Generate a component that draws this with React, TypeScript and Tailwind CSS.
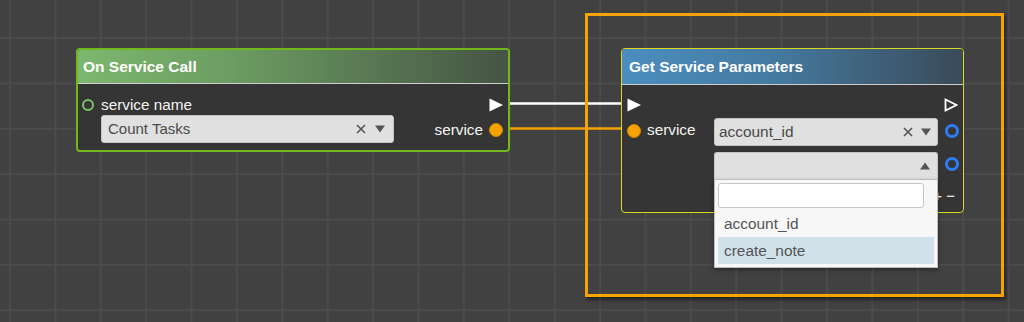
function ExecArrow({ outline = false }: { outline?: boolean }) {
  return (
    <svg width="14" height="14" viewBox="0 0 14 14" className="shrink-0">
      {outline ? (
        <polygon points="1.5,1.5 12.5,7 1.5,12.5" fill="none" stroke="#ffffff" strokeWidth="1.8" strokeLinejoin="miter" />
      ) : (
        <polygon points="0.5,0.5 14,7 0.5,13.5" fill="#ffffff" />
      )}
    </svg>
  );
}

function Slot({ kind }: { kind: "green" | "orange" | "blue" }) {
  if (kind === "orange") {
    return <span className="block w-[14px] h-[14px] shrink-0 rounded-full bg-[#f7a200] border-[1.5px] border-[#d68a00]" />;
  }
  if (kind === "green") {
    return <span className="block w-[12px] h-[12px] shrink-0 rounded-full border-[2.5px] border-[#7cc46b]" />;
  }
  return <span className="block w-[14px] h-[14px] shrink-0 rounded-full border-[3px] border-[#2c7cf8]" />;
}

function Cross() {
  return (
    <svg width="10" height="10" viewBox="0 0 10 10" className="shrink-0">
      <path d="M1 1 L9 9 M9 1 L1 9" stroke="#555555" strokeWidth="1.6" />
    </svg>
  );
}

function Caret({ up = false }: { up?: boolean }) {
  return (
    <svg width="10" height="8" viewBox="0 0 10 8" className="shrink-0">
      <polygon points={up ? "0,7.5 10,7.5 5,0.5" : "0,0.5 10,0.5 5,7.5"} fill="#555555" />
    </svg>
  );
}

function ServiceCallNode() {
  return (
    <div className="absolute left-[76px] top-[48px] w-[434px] h-[104px] flex flex-col rounded-[4px] border-2 border-[#72b81c] bg-[#353535] overflow-hidden">
      <div className="h-[34px] shrink-0 flex items-center px-[5px] border-b border-[#cfcfcf] bg-[linear-gradient(to_right,#7db76f,#6c9d62_35%,#465444)] text-[15.5px] font-bold text-white">
        On Service Call
      </div>
      <div className="flex flex-col pt-[11px]">
        <div className="h-[20px] flex items-center justify-between pl-[4px] pr-[5px]">
          <div className="flex items-center gap-[7px]">
            <Slot kind="green" />
            <span className="text-[15.3px] text-[#f4f4f4]">service name</span>
          </div>
          <ExecArrow />
        </div>
        <div className="h-[28px] flex items-center justify-between pl-[23px] pr-[5px]">
          <div className="w-[293px] h-[28px] flex items-center justify-between px-[6px] pr-[8px] rounded-[3px] bg-[#e0e0e0] border border-[#c4c4c4]">
            <span className="text-[15px] text-[#4a4a4a]">Count Tasks</span>
            <div className="flex items-center gap-[9px]">
              <Cross />
              <Caret />
            </div>
          </div>
          <div className="flex items-center gap-[6px] pt-[2px]">
            <span className="text-[15.3px] text-[#f4f4f4]">service</span>
            <Slot kind="orange" />
          </div>
        </div>
      </div>
    </div>
  );
}

function ParamsNode() {
  return (
    <div className="absolute left-[621px] top-[48px] w-[343px] h-[165px] flex flex-col rounded-[4px] border border-[#d8d81e] bg-[#353535] overflow-hidden">
      <div className="h-[36px] shrink-0 flex items-center px-[7px] border-b border-[#cfcfcf] bg-[linear-gradient(to_right,#4b8ebf,#447aa0_45%,#3b4a57)] text-[15.5px] font-bold text-white">
        Get Service Parameters
      </div>
      <div className="flex flex-col">
        <div className="mt-[10px] h-[20px] flex items-center justify-between pl-[5px] pr-[5px]">
          <ExecArrow />
          <ExecArrow outline />
        </div>
        <div className="mt-[3px] h-[28px] flex items-center">
          <div className="w-[92px] flex items-center gap-[6px] pl-[5px] pb-[3px]">
            <Slot kind="orange" />
            <span className="text-[15.3px] text-[#f4f4f4]">service</span>
          </div>
          <div className="w-[224px] h-[28px] flex items-center justify-between pl-[4px] pr-[6px] rounded-[3px] bg-[#e0e0e0] border border-[#c4c4c4]">
            <span className="text-[15.4px] text-[#4a4a4a]">account_id</span>
            <div className="flex items-center gap-[8px]">
              <Cross />
              <Caret />
            </div>
          </div>
          <div className="flex-1 flex justify-center pl-[2px] pb-[3px]">
            <Slot kind="blue" />
          </div>
        </div>
        <div className="mt-[6px] h-[27px] flex items-center">
          <div className="w-[92px]" />
          <div className="w-[224px] h-[27px] flex items-center justify-end pr-[7px] rounded-t-[3px] bg-[#e0e0e0] border border-b-0 border-[#c4c4c4]">
            <Caret up />
          </div>
          <div className="flex-1 flex justify-center pl-[2px] pb-[3px]">
            <Slot kind="blue" />
          </div>
        </div>
        <div className="mt-[8px] h-[18px] flex items-center justify-end pr-[8px] text-[15px] text-white">
          + −
        </div>
      </div>
    </div>
  );
}

function Menu() {
  return (
    <div className="absolute left-[714px] top-[179px] w-[224px] h-[89px] flex flex-col bg-[#f7f7f7] border border-[#bdbdbd] shadow-[0_2px_4px_rgba(0,0,0,0.35)]">
      <div className="mt-[3px] ml-[3px] w-[206px] h-[25px] shrink-0 rounded-[3px] bg-white border border-[#c6c6c6]" />
      <div className="mt-[3px] h-[26px] flex items-center pl-[9px] text-[15.4px] text-[#555555]">account_id</div>
      <div className="mx-[3px] h-[27px] flex items-center pl-[6px] bg-[#d0e1ea] text-[15.4px] text-[#555555]">create_note</div>
    </div>
  );
}

export default function App() {
  return (
    <div className="relative w-[1024px] h-[322px] overflow-hidden bg-[#414141] bg-[linear-gradient(to_right,#4b4b4b_2px,transparent_2px),linear-gradient(to_bottom,#4b4b4b_2px,transparent_2px)] [background-size:45.4px_45.4px] [background-position:9px_37px] font-['Liberation_Sans',Arial,sans-serif]">
      <svg className="absolute inset-0" width="1024" height="322">
        <line x1="500" y1="103.5" x2="628" y2="103.5" stroke="#ffffff" strokeWidth="2.5" />
        <line x1="500" y1="128.5" x2="628" y2="128.5" stroke="#f5a000" strokeWidth="2.5" />
      </svg>
      <div className="absolute left-[585px] top-[13px] w-[419px] h-[284px] border-[3px] border-[#f5a400] shadow-[2px_3px_3px_rgba(0,0,0,0.45)]" />
      <ServiceCallNode />
      <ParamsNode />
      <Menu />
    </div>
  );
}
